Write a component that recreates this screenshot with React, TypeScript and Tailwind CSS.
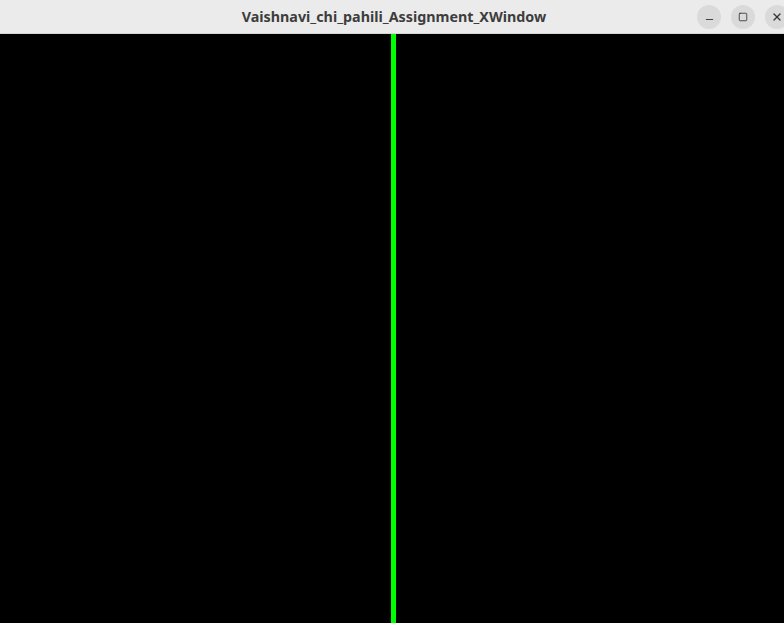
import { Minus, Square, X } from 'lucide-react'

export default function App() {
  return (
    <div className="w-[784px] h-[623px] flex flex-col overflow-hidden bg-black">
      <header className="h-[34px] shrink-0 bg-[#ebebeb] border-b border-[#d6d6d6] relative flex items-center justify-center">
        <span
          className="text-[14.3px] font-bold text-[#3d3d3d] ml-[4px]"
          style={{ fontFamily: '"Noto Sans", "DejaVu Sans", sans-serif' }}
        >
          Vaishnavi_chi_pahili_Assignment_XWindow
        </span>
        <div className="absolute right-[-5px] top-[5px] flex gap-[10px]">
          <button type="button" className="w-[24px] h-[24px] rounded-full bg-[#dadada] flex items-center justify-center text-[#333]">
            <Minus size={11} strokeWidth={2} className="mt-[5px]" />
          </button>
          <button type="button" className="w-[24px] h-[24px] rounded-full bg-[#dadada] flex items-center justify-center text-[#333]">
            <Square size={10} strokeWidth={2} />
          </button>
          <button type="button" className="w-[24px] h-[24px] rounded-full bg-[#dadada] flex items-center justify-center text-[#333]">
            <X size={12} strokeWidth={2.5} />
          </button>
        </div>
      </header>
      <main className="flex-1 flex">
        <div className="w-[391px]" />
        <div className="w-[5px] bg-[#00ff00]" />
        <div className="flex-1" />
      </main>
    </div>
  )
}
